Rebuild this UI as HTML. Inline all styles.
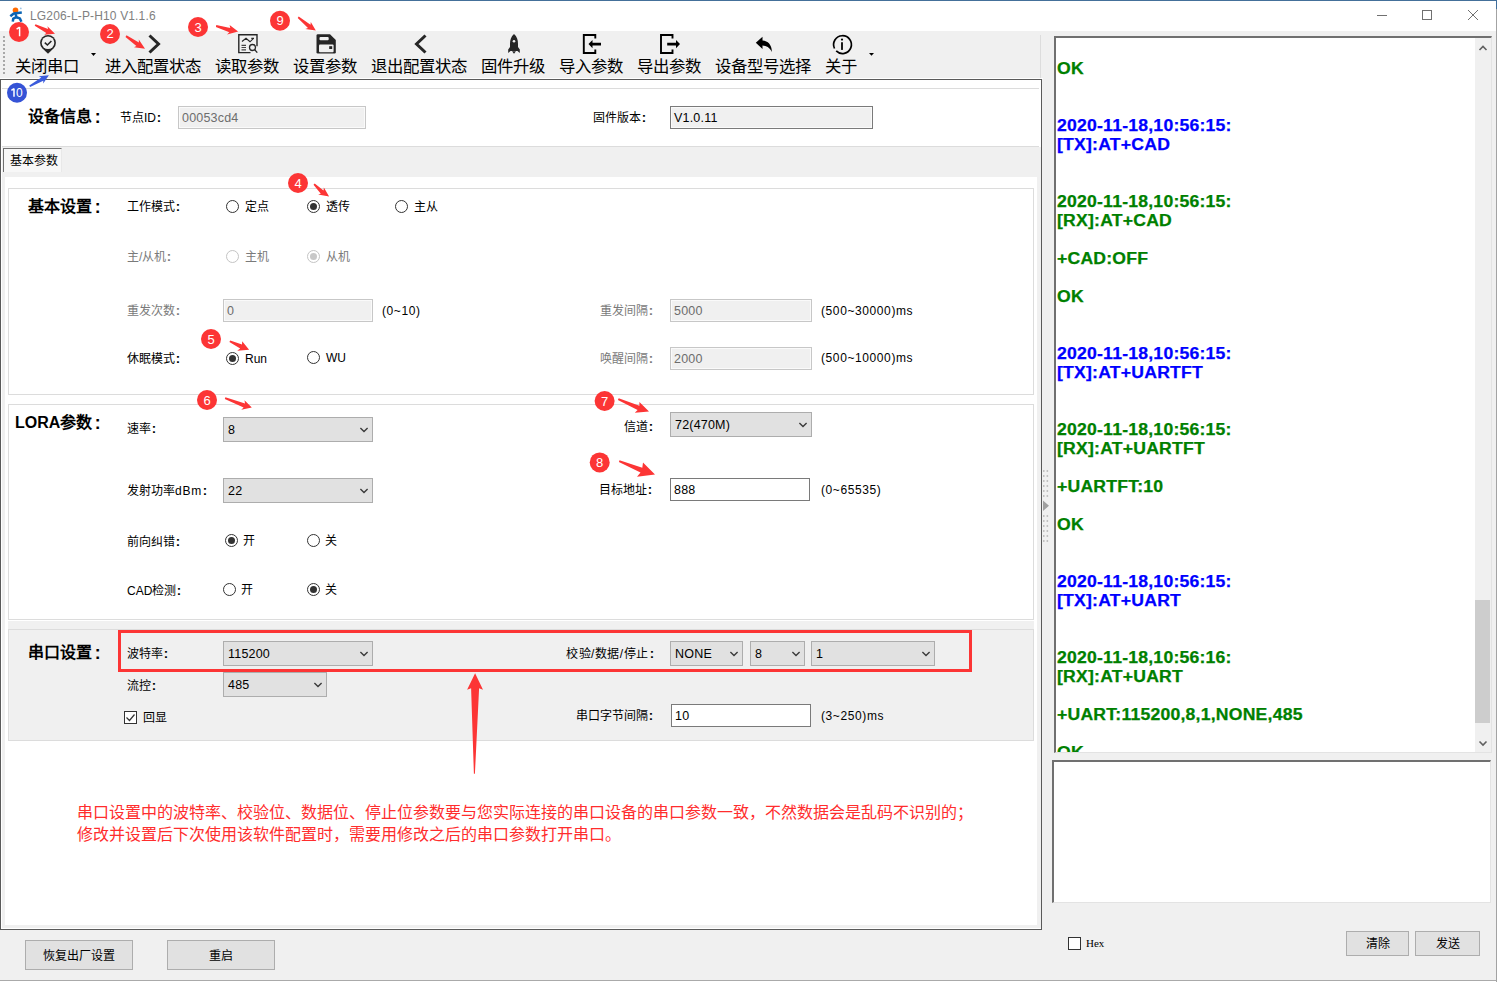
<!DOCTYPE html>
<html lang="zh-CN">
<head>
<meta charset="utf-8">
<style>
*{margin:0;padding:0;box-sizing:border-box}
html,body{width:1497px;height:982px;overflow:hidden;background:#fff}
body{position:relative;font-family:"Liberation Sans",sans-serif;font-size:12px;color:#000}
.a{position:absolute}
.t{position:absolute;white-space:nowrap;line-height:16px;font-size:12px;margin-top:1.3px}
.t.bold{margin-top:1px}
.t.bold .c{margin-left:2.5px}
.c{display:inline-block;font-weight:bold;margin-left:1px;transform:scale(1.1)}
.tb{position:absolute;white-space:nowrap;font-size:16.4px;line-height:20px;color:#000}
.bold{font-weight:bold;font-size:16px;line-height:20px}
.gray{color:#7a7a7a}
.inp{position:absolute;background:#f0f0f0;border:1px solid #c7c7c7;box-shadow:inset 0 0 0 1px #fafafa;font-size:12.5px;line-height:20px;padding-left:3px;padding-top:1px;color:#6d6d6d;letter-spacing:0.2px}
.inpw{position:absolute;background:#fff;border:1px solid #7a7a7a;font-size:12.5px;line-height:20px;padding-left:3px;padding-top:1px;color:#000;letter-spacing:0.2px}
.sel{position:absolute;background:#e1e1e1;border:1px solid #adadad;font-size:12.5px;line-height:22px;padding-left:4px;padding-top:1px;color:#000;letter-spacing:0.2px}
.sel svg{position:absolute;right:3px;top:7.8px}
.rad{position:absolute;width:13px;height:13px;border:1px solid #333;border-radius:50%;background:#fff}
.rad.on::after{content:"";position:absolute;left:2px;top:2px;width:7px;height:7px;border-radius:50%;background:#333}
.rad.dis{border-color:#c4c4c4}
.rad.dis.on::after{background:#c8c8c8}
.btn{position:absolute;background:#e1e1e1;border:1px solid #adadad;text-align:center;font-size:12px;color:#000;padding-top:1px}
.log{position:absolute;left:1057px;font-weight:bold;font-size:15px;line-height:19px;white-space:nowrap;letter-spacing:1.3px}
.bl{color:#0000ff}.gr{color:#008000}
</style>
</head>
<body>
<!-- window frame top line -->
<div class="a" style="left:0;top:0;width:1497px;height:1px;background:#44709a"></div>

<!-- title bar -->
<div class="a" style="left:0;top:1px;width:1496px;height:30px;background:#fff"></div>
<svg class="a" style="left:0;top:0" width="30" height="30" viewBox="0 0 30 30">
 <circle cx="15.5" cy="10.3" r="2.8" fill="#ff6a00"/>
 <circle cx="20.8" cy="8.4" r="0.9" fill="#9cc4e8"/>
 <path d="M10.3 16.2 L13.8 13.4 L21.8 12.6 M15.6 13.6 L16.4 17.2 L13.2 18.6 L12.8 21.6 M16.4 17.2 L19.8 18.4 L21.4 21.8" stroke="#0a64b4" stroke-width="2.5" fill="none" stroke-linejoin="round"/>
</svg>
<div class="t" style="left:30px;top:6.5px;font-size:12px;color:#808080;line-height:16px;letter-spacing:0.15px">LG206-L-P-H10 V1.1.6</div>
<svg class="a" style="left:1370px;top:5px" width="120" height="22">
 <line x1="7" y1="10.5" x2="17" y2="10.5" stroke="#707070" stroke-width="1"/>
 <rect x="52.5" y="5.5" width="9" height="9" fill="none" stroke="#707070" stroke-width="1"/>
 <path d="M98 5 L108 15 M108 5 L98 15" stroke="#707070" stroke-width="1"/>
</svg>

<!-- toolbar -->
<div class="a" style="left:0;top:31px;width:1496px;height:48px;background:#f0f0f0"></div>
<svg class="a" style="left:0;top:0" width="8" height="80"><rect x="3" y="36" width="2" height="2" fill="#a8a8a8"/><rect x="3" y="40" width="2" height="2" fill="#a8a8a8"/><rect x="3" y="44" width="2" height="2" fill="#a8a8a8"/><rect x="3" y="48" width="2" height="2" fill="#a8a8a8"/><rect x="3" y="52" width="2" height="2" fill="#a8a8a8"/><rect x="3" y="56" width="2" height="2" fill="#a8a8a8"/><rect x="3" y="60" width="2" height="2" fill="#a8a8a8"/><rect x="3" y="64" width="2" height="2" fill="#a8a8a8"/><rect x="3" y="68" width="2" height="2" fill="#a8a8a8"/><rect x="3" y="72" width="2" height="2" fill="#a8a8a8"/></svg>

<div class="tb" style="left:15px;top:55.5px">关闭串口</div>
<div class="tb" style="left:105px;top:55.5px">进入配置状态</div>
<div class="tb" style="left:215px;top:55.5px">读取参数</div>
<div class="tb" style="left:293px;top:55.5px">设置参数</div>
<div class="tb" style="left:371px;top:55.5px">退出配置状态</div>
<div class="tb" style="left:481px;top:55.5px">固件升级</div>
<div class="tb" style="left:559px;top:55.5px">导入参数</div>
<div class="tb" style="left:637px;top:55.5px">导出参数</div>
<div class="tb" style="left:715px;top:55.5px">设备型号选择</div>
<div class="tb" style="left:825px;top:55.5px">关于</div>

<!-- toolbar icons -->
<svg class="a" style="left:0;top:30px" width="900" height="30" viewBox="0 30 900 30">
 <!-- pin check -->
 <path d="M48 53.7 L42.3 48.3 A7.9 7.9 0 1 1 53.7 48.3 Z" fill="#262626"/>
 <circle cx="48" cy="42.8" r="6.3" fill="#f0f0f0"/>
 <path d="M44.8 42.6 L47.4 45 L51.4 41" stroke="#262626" stroke-width="1.6" fill="none"/>
 <path d="M91 53 L96 53 L93.5 56 Z" fill="#000"/>
 <!-- chevron right -->
 <path d="M149.5 35.5 L158.5 44 L149.5 52.5" stroke="#262626" stroke-width="3" fill="none"/>
 <!-- read params -->
 <path d="M257 46.2 V34.8 H238.8 V52.6 H250.5" stroke="#262626" stroke-width="1.4" fill="none"/>
 <path d="M242 41.5 L246 38.3 L250 41.8 L253.5 38.3 M251.3 38.3 H254" stroke="#262626" stroke-width="1.2" fill="none"/>
 <path d="M241.5 45.3 H246 M241.5 47.5 H246 M241.5 49.8 H246" stroke="#444" stroke-width="1.2"/>
 <circle cx="252.5" cy="47.5" r="3" stroke="#262626" stroke-width="1.3" fill="none"/>
 <path d="M254.6 49.6 L257.3 52.6" stroke="#262626" stroke-width="1.4"/>
 <!-- save -->
 <path d="M316.5 35.5 Q316.5 34.3 317.8 34.3 H330 L335.8 40 V52.3 Q335.8 53.6 334.5 53.6 H317.8 Q316.5 53.6 316.5 52.3 Z" fill="#262626"/>
 <rect x="319.5" y="37" width="9.2" height="3.2" rx="1" fill="#f0f0f0"/>
 <rect x="319" y="44.4" width="14.6" height="7.9" rx="1" fill="#f0f0f0"/>
 <rect x="329.2" y="46.2" width="3" height="2.8" fill="#262626"/>
 <!-- chevron left -->
 <path d="M425.5 35.5 L416.5 44 L425.5 52.5" stroke="#262626" stroke-width="3" fill="none"/>
 <!-- rocket -->
 <path d="M514 34 C511 36.5 510 40 510 44 L510 47 L508.2 49.5 L508.2 53 L510.5 51 H517.5 L519.8 53 L519.8 49.5 L518 47 L518 44 C518 40 517 36.5 514 34 Z" fill="#262626"/>
 <circle cx="514" cy="41.2" r="1.3" fill="#f0f0f0"/>
 <path d="M512 51.3 H516 L514 53.8 Z" fill="#262626"/>
 <!-- import -->
 <path d="M595.3 38.6 V35 H583.8 V53 H595.3 V49.6" stroke="#000" stroke-width="1.9" fill="none"/>
 <path d="M588.5 44.1 L592.5 40 V42.8 H601 V45.4 H592.5 V48.2 Z" fill="#000"/>
 <!-- export -->
 <path d="M672.5 38.6 V35 H661 V53 H672.5 V49.6" stroke="#000" stroke-width="1.9" fill="none"/>
 <path d="M680 44.1 L676 40 V42.8 H667.2 V45.4 H676 V48.2 Z" fill="#000"/>
 <!-- reply -->
 <path d="M755.8 42.8 L762.5 36.8 V40.5 C768 40.8 772 45 771.8 52 C769.5 47.5 766.5 45.8 762.5 45.6 V49 Z" fill="#000"/>
 <!-- info -->
 <path d="M834.5 48.5 A8.9 8.9 0 1 1 836.2 50.9" stroke="#000" stroke-width="1.7" fill="none"/>
 <circle cx="842" cy="39.6" r="1.1" fill="#000"/>
 <path d="M842 43 V49.2" stroke="#000" stroke-width="1.8" stroke-linecap="round"/>
 <path d="M869 53 L874 53 L871.5 55.8 Z" fill="#000"/>
</svg>
<div class="a" style="left:1040px;top:35px;width:1px;height:43px;background:#dcdcdc"></div>

<!-- LEFT MAIN PANEL -->
<div class="a" style="left:0;top:78px;width:1043px;height:1px;background:#fff"></div>
<div class="a" style="left:0;top:79px;width:1042px;height:851px;background:#f0f0f0;border:1px solid #5a5a5a;box-shadow:inset 1px -1px 0 #fff"></div>
<div class="a" style="left:1px;top:80px;width:1040px;height:67px;background:#fff"></div>
<!-- device info strip -->
<div class="a" style="left:2px;top:88px;width:1037px;height:1px;background:#dcdcdc"></div>
<div class="a" style="left:2px;top:146px;width:1037px;height:1px;background:#dcdcdc"></div>
<div class="t bold" style="left:28px;top:106px">设备信息<span class="c">:</span></div>
<div class="t" style="left:120px;top:109px">节点ID<span class="c">:</span></div>
<div class="inp" style="left:178px;top:106px;width:188px;height:23px;line-height:21px">00053cd4</div>
<div class="t" style="left:593px;top:109px">固件版本<span class="c">:</span></div>
<div class="inp" style="left:670px;top:106px;width:203px;height:23px;line-height:21px;border-color:#7a7a7a;color:#000">V1.0.11</div>

<!-- tab strip -->

<div class="a" style="left:3px;top:148px;width:59px;height:24px;background:#f7f7f7;border-left:1px solid #707070;border-top:1px solid #707070;border-right:1px solid #e8e8e8"></div>
<div class="t" style="left:10px;top:152px">基本参数</div>

<!-- tab page -->
<div class="a" style="left:5px;top:177px;width:1032px;height:748px;background:#fff"></div>

<!-- group 1 -->
<div class="a" style="left:8px;top:188px;width:1026px;height:207px;border:1px solid #dcdcdc"></div>
<div class="t bold" style="left:28px;top:196px">基本设置<span class="c">:</span></div>
<div class="t" style="left:127px;top:198px">工作模式<span class="c">:</span></div>
<div class="rad" style="left:226px;top:200px"></div><div class="t" style="left:245px;top:198px">定点</div>
<div class="rad on" style="left:307px;top:200px"></div><div class="t" style="left:326px;top:198px">透传</div>
<div class="rad" style="left:395px;top:200px"></div><div class="t" style="left:414px;top:198px">主从</div>

<div class="t gray" style="left:127px;top:248px">主/从机<span class="c">:</span></div>
<div class="rad dis" style="left:226px;top:250px"></div><div class="t gray" style="left:245px;top:248px">主机</div>
<div class="rad dis on" style="left:307px;top:250px"></div><div class="t gray" style="left:326px;top:248px">从机</div>

<div class="t gray" style="left:127px;top:302px">重发次数<span class="c">:</span></div>
<div class="inp" style="left:223px;top:299px;width:150px;height:23px;line-height:21px">0</div>
<div class="t" style="left:382px;top:302px;letter-spacing:0.6px">(0~10)</div>
<div class="t gray" style="left:600px;top:302px">重发间隔<span class="c">:</span></div>
<div class="inp" style="left:670px;top:299px;width:142px;height:23px;line-height:21px">5000</div>
<div class="t" style="left:821px;top:302px;letter-spacing:0.6px">(500~30000)ms</div>

<div class="t" style="left:127px;top:350px">休眠模式<span class="c">:</span></div>
<div class="rad on" style="left:226px;top:352px"></div><div class="t" style="left:245px;top:350px">Run</div>
<div class="rad" style="left:307px;top:351px"></div><div class="t" style="left:326px;top:349px">WU</div>
<div class="t gray" style="left:600px;top:350px">唤醒间隔<span class="c">:</span></div>
<div class="inp" style="left:670px;top:347px;width:142px;height:23px;line-height:21px">2000</div>
<div class="t" style="left:821px;top:349px;letter-spacing:0.6px">(500~10000)ms</div>

<!-- group 2 LORA -->
<div class="a" style="left:8px;top:404px;width:1026px;height:216px;border:1px solid #dcdcdc"></div>
<div class="t bold" style="left:15px;top:412px">LORA参数<span class="c">:</span></div>
<div class="t" style="left:127px;top:420px">速率<span class="c">:</span></div>
<div class="sel" style="left:223px;top:417px;width:150px;height:25px">8<svg width="10" height="8"><path d="M1.4 2 L5 5.5 L8.6 2" stroke="#3a3a3a" stroke-width="1.4" fill="none"/></svg></div>
<div class="t" style="left:624px;top:418px">信道<span class="c">:</span></div>
<div class="sel" style="left:670px;top:412px;width:142px;height:25px">72(470M)<svg width="10" height="8"><path d="M1.4 2 L5 5.5 L8.6 2" stroke="#3a3a3a" stroke-width="1.4" fill="none"/></svg></div>
<div class="t" style="left:127px;top:482px">发射功率<span style="letter-spacing:0.8px">dBm</span><span class="c">:</span></div>
<div class="sel" style="left:223px;top:478px;width:150px;height:25px">22<svg width="10" height="8"><path d="M1.4 2 L5 5.5 L8.6 2" stroke="#3a3a3a" stroke-width="1.4" fill="none"/></svg></div>
<div class="t" style="left:599px;top:481px">目标地址<span class="c">:</span></div>
<div class="inpw" style="left:670px;top:478px;width:140px;height:23px;line-height:21px">888</div>
<div class="t" style="left:821px;top:481px;letter-spacing:0.6px">(0~65535)</div>
<div class="t" style="left:127px;top:533px">前向纠错<span class="c">:</span></div>
<div class="rad on" style="left:225px;top:534px"></div><div class="t" style="left:243px;top:532px">开</div>
<div class="rad" style="left:307px;top:534px"></div><div class="t" style="left:325px;top:532px">关</div>
<div class="t" style="left:127px;top:582px">CAD检测<span class="c">:</span></div>
<div class="rad" style="left:223px;top:583px"></div><div class="t" style="left:241px;top:581px">开</div>
<div class="rad on" style="left:307px;top:583px"></div><div class="t" style="left:325px;top:581px">关</div>

<!-- serial group -->
<div class="a" style="left:8px;top:621px;width:1026px;height:120px;background:#f0f0f0"></div>
<div class="a" style="left:8px;top:629px;width:1026px;height:112px;border:1px solid #dcdcdc"></div>
<div class="t bold" style="left:28px;top:642px">串口设置<span class="c">:</span></div>
<div class="t" style="left:127px;top:645px">波特率<span class="c">:</span></div>
<div class="sel" style="left:223px;top:641px;width:150px;height:25px">115200<svg width="10" height="8"><path d="M1.4 2 L5 5.5 L8.6 2" stroke="#3a3a3a" stroke-width="1.4" fill="none"/></svg></div>
<div class="t" style="left:566px;top:645px;letter-spacing:0.5px">校验/数据/停止<span class="c">:</span></div>
<div class="sel" style="left:670px;top:641px;width:73px;height:25px">NONE<svg width="10" height="8"><path d="M1.4 2 L5 5.5 L8.6 2" stroke="#3a3a3a" stroke-width="1.4" fill="none"/></svg></div>
<div class="sel" style="left:750px;top:641px;width:55px;height:25px">8<svg width="10" height="8"><path d="M1.4 2 L5 5.5 L8.6 2" stroke="#3a3a3a" stroke-width="1.4" fill="none"/></svg></div>
<div class="sel" style="left:811px;top:641px;width:124px;height:25px">1<svg width="10" height="8"><path d="M1.4 2 L5 5.5 L8.6 2" stroke="#3a3a3a" stroke-width="1.4" fill="none"/></svg></div>
<div class="t" style="left:127px;top:677px">流控<span class="c">:</span></div>
<div class="sel" style="left:223px;top:672px;width:104px;height:25px">485<svg width="10" height="8"><path d="M1.4 2 L5 5.5 L8.6 2" stroke="#3a3a3a" stroke-width="1.4" fill="none"/></svg></div>
<div class="a" style="left:124px;top:711px;width:13px;height:13px;border:1px solid #333;background:#fff"></div>
<svg class="a" style="left:124px;top:711px" width="13" height="13"><path d="M2.5 6.5 L5.5 9.5 L10.5 3.5" stroke="#333" stroke-width="1.2" fill="none"/></svg>
<div class="t" style="left:143px;top:709px">回显</div>
<div class="t" style="left:576px;top:707px">串口字节间隔<span class="c">:</span></div>
<div class="inpw" style="left:671px;top:704px;width:140px;height:23px;line-height:21px">10</div>
<div class="t" style="left:821px;top:707px;letter-spacing:0.6px">(3~250)ms</div>

<!-- annotation text -->
<div class="a" style="left:77px;top:802px;color:#ff2d2d;font-size:16px;line-height:22px;white-space:nowrap">串口设置中的波特率、校验位、数据位、停止位参数要与您实际连接的串口设备的串口参数一致，不然数据会是乱码不识别的；<br>修改并设置后下次使用该软件配置时，需要用修改之后的串口参数打开串口。</div>

<!-- bottom bar -->
<div class="a" style="left:0;top:930px;width:1496px;height:50px;background:#f0f0f0"></div>
<div class="a" style="left:0;top:980px;width:1497px;height:1px;background:#aaaaaa"></div>
<div class="btn" style="left:25px;top:940px;width:108px;height:30px;line-height:28px">恢复出厂设置</div>
<div class="btn" style="left:167px;top:940px;width:108px;height:30px;line-height:28px">重启</div>

<!-- RIGHT PANEL -->
<div class="a" style="left:1042px;top:79px;width:454px;height:851px;background:#f0f0f0"></div>
<div class="a" style="left:1054px;top:36px;width:438px;height:717px;background:#fff;border-top:2px solid #707070;border-left:2px solid #707070;border-right:1px solid #e3e3e3;border-bottom:1px solid #e3e3e3;overflow:hidden">
</div>
<div id="logbox" class="a" style="left:1056px;top:38px;width:419px;height:714px;overflow:hidden">
<div style="position:absolute;left:1px;top:20.7px;font-weight:bold;font-size:16px;line-height:19px;white-space:nowrap;letter-spacing:0.2px;transform:scaleX(1.1);transform-origin:0 0;-webkit-text-stroke:0.25px currentColor">
<div class="gr">OK</div><div>&nbsp;</div><div>&nbsp;</div>
<div class="bl">2020-11-18,10:56:15:</div><div class="bl">[TX]:AT+CAD</div><div>&nbsp;</div><div>&nbsp;</div>
<div class="gr">2020-11-18,10:56:15:</div><div class="gr">[RX]:AT+CAD</div><div>&nbsp;</div>
<div class="gr">+CAD:OFF</div><div>&nbsp;</div>
<div class="gr">OK</div><div>&nbsp;</div><div>&nbsp;</div>
<div class="bl">2020-11-18,10:56:15:</div><div class="bl">[TX]:AT+UARTFT</div><div>&nbsp;</div><div>&nbsp;</div>
<div class="gr">2020-11-18,10:56:15:</div><div class="gr">[RX]:AT+UARTFT</div><div>&nbsp;</div>
<div class="gr">+UARTFT:10</div><div>&nbsp;</div>
<div class="gr">OK</div><div>&nbsp;</div><div>&nbsp;</div>
<div class="bl">2020-11-18,10:56:15:</div><div class="bl">[TX]:AT+UART</div><div>&nbsp;</div><div>&nbsp;</div>
<div class="gr">2020-11-18,10:56:16:</div><div class="gr">[RX]:AT+UART</div><div>&nbsp;</div>
<div class="gr">+UART:115200,8,1,NONE,485</div><div>&nbsp;</div>
<div class="gr">OK</div>
</div>
</div>
<!-- scrollbar -->
<div class="a" style="left:1475px;top:38px;width:16px;height:714px;background:#f0f0f0"></div>
<div class="a" style="left:1475px;top:600px;width:15px;height:123px;background:#cdcdcd"></div>
<svg class="a" style="left:1475px;top:38px" width="16" height="714">
 <path d="M4.5 12 L8 8.5 L11.5 12" stroke="#606060" stroke-width="1.6" fill="none"/>
 <path d="M4.5 703.5 L8 707 L11.5 703.5" stroke="#606060" stroke-width="1.6" fill="none"/>
</svg>

<svg class="a" style="left:1040px;top:465px" width="14" height="80"><rect x="3" y="5.5" width="1.5" height="1" fill="#909090"/><rect x="6.6" y="5.5" width="1.5" height="1" fill="#909090"/><rect x="3" y="10.5" width="1.5" height="1" fill="#909090"/><rect x="6.6" y="10.5" width="1.5" height="1" fill="#909090"/><rect x="3" y="15.5" width="1.5" height="1" fill="#909090"/><rect x="6.6" y="15.5" width="1.5" height="1" fill="#909090"/><rect x="3" y="20.5" width="1.5" height="1" fill="#909090"/><rect x="6.6" y="20.5" width="1.5" height="1" fill="#909090"/><rect x="3" y="25.5" width="1.5" height="1" fill="#909090"/><rect x="6.6" y="25.5" width="1.5" height="1" fill="#909090"/><rect x="3" y="30.5" width="1.5" height="1" fill="#909090"/><rect x="6.6" y="30.5" width="1.5" height="1" fill="#909090"/><rect x="3" y="50.5" width="1.5" height="1" fill="#909090"/><rect x="6.6" y="50.5" width="1.5" height="1" fill="#909090"/><rect x="3" y="55.5" width="1.5" height="1" fill="#909090"/><rect x="6.6" y="55.5" width="1.5" height="1" fill="#909090"/><rect x="3" y="60.5" width="1.5" height="1" fill="#909090"/><rect x="6.6" y="60.5" width="1.5" height="1" fill="#909090"/><rect x="3" y="65.5" width="1.5" height="1" fill="#909090"/><rect x="6.6" y="65.5" width="1.5" height="1" fill="#909090"/><rect x="3" y="70.5" width="1.5" height="1" fill="#909090"/><rect x="6.6" y="70.5" width="1.5" height="1" fill="#909090"/><rect x="3" y="75.5" width="1.5" height="1" fill="#909090"/><rect x="6.6" y="75.5" width="1.5" height="1" fill="#909090"/><path d="M3 35.4 L9 40.7 L3 46 Z" fill="#a0a0a0"/></svg>
<!-- send box -->
<div class="a" style="left:1052px;top:760px;width:439px;height:143px;background:#fff;border-top:2px solid #707070;border-left:2px solid #707070;border-right:1px solid #e3e3e3;border-bottom:1px solid #e3e3e3"></div>
<div class="a" style="left:1068px;top:937px;width:13px;height:13px;border:1px solid #333;background:#fff"></div>
<div class="t" style="left:1086px;top:934px;font-family:'Liberation Serif',serif;font-size:11px">Hex</div>
<div class="btn" style="left:1346px;top:931px;width:63px;height:25px;line-height:23px">清除</div>
<div class="btn" style="left:1415px;top:931px;width:65px;height:25px;line-height:23px">发送</div>

<!-- main panel right border redraw -->


<!-- ANNOTATIONS -->
<svg class="a" style="left:0;top:0" width="1497" height="982">
 <defs>
 </defs>
 <g fill="#fc3535">
  <circle cx="19" cy="32" r="10"/>
  <circle cx="110" cy="34" r="10"/>
  <circle cx="198" cy="27" r="10"/>
  <circle cx="280" cy="20.8" r="10"/>
  <circle cx="298" cy="183" r="10"/>
  <circle cx="211" cy="339" r="10"/>
  <circle cx="207" cy="400" r="10"/>
  <circle cx="604.6" cy="401" r="10"/>
  <circle cx="599.7" cy="462.4" r="10"/>
 </g>
 <rect x="119.5" y="631.5" width="851" height="39" fill="none" stroke="#fc3535" stroke-width="3"/>
 <path fill="#fc3535" d="M34.7 25.8 L46.3 33.1 L44.3 34.7 L55.0 33.7 L47.4 26.2 L48.1 29.0 L35.5 24.2 Z M125.5 36.9 L136.4 46.1 L134.0 47.3 L145.0 48.7 L138.8 39.6 L138.9 42.4 L126.5 35.3 Z M215.9 26.9 L229.3 32.3 L227.1 34.6 L238.1 31.6 L229.6 25.0 L230.3 28.0 L216.3 25.1 Z M297.7 17.9 L308.0 28.1 L305.3 29.0 L315.8 30.6 L310.8 22.0 L310.5 24.7 L298.7 16.5 Z M313.5 184.8 L320.8 193.7 L318.1 194.6 L329.1 196.5 L323.9 187.6 L323.5 190.4 L314.7 183.4 Z M229.4 342.1 L240.2 348.6 L237.2 350.7 L249.1 349.7 L242.2 341.3 L242.0 344.6 L230.2 340.5 Z M224.8 398.9 L243.6 407.6 L241.3 409.8 L251.8 407.5 L244.5 400.3 L245.0 403.5 L225.4 397.3 Z M617.9 400.1 L637.6 410.0 L634.8 412.8 L649.0 411.6 L639.4 401.9 L639.4 405.8 L618.7 398.3 Z M618.9 462.0 L640.5 472.5 L637.0 476.7 L655.0 474.4 L643.0 462.5 L642.3 467.8 L619.5 460.2 Z M474.9 773.8 L479.1 688.3 L483.0 689.8 L475.1 673.2 L467.1 689.8 L471.1 688.3 L473.9 773.8 Z"/>
 <path fill="#3b5bdb" d="M30.1 87.0 L43.3 80.8 L43.2 83.5 L48.9 75.3 L38.8 76.2 L41.3 77.4 L29.3 85.6 Z"/>
  <circle cx="17" cy="92.8" r="10" fill="#3553d6"/>
 <path d="M19.6 27 V36.2 M19.6 27.2 L16.6 29.2" stroke="#fff" stroke-width="1.5" fill="none"/>
 <path d="M14 88.4 V96.8 M14 88.6 L11.4 90.4" stroke="#fff" stroke-width="1.5" fill="none"/>
 <g fill="#fff" style="font-family:'Liberation Sans',sans-serif;font-size:13px" text-anchor="middle">
  <text x="110" y="38.3">2</text>
  <text x="198" y="31.5">3</text>
  <text x="280" y="25.3">9</text>
  <text x="298" y="187.5">4</text>
  <text x="211" y="343.5">5</text>
  <text x="207" y="405">6</text>
  <text x="604.6" y="406">7</text>
  <text x="599.7" y="467.4">8</text>
  <text x="19.3" y="97.2" style="font-size:12px">0</text>
 </g>
</svg>
<div class="a" style="left:1496px;top:0;width:1px;height:9px;background:#3f6e9c"></div><div class="a" style="left:1496px;top:9px;width:1px;height:973px;background:#a3a3a3"></div>
</body>
</html>
